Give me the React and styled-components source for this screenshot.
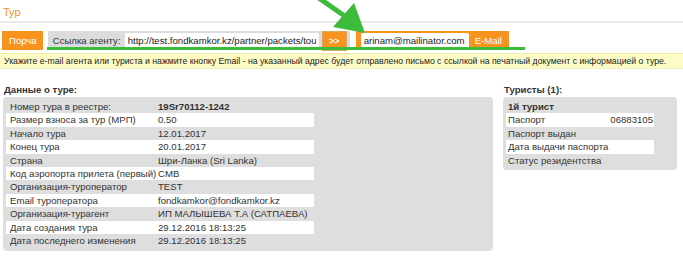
import styled, { createGlobalStyle } from 'styled-components';

const GlobalStyle = createGlobalStyle`
  body {
    margin: 0;
    background: #fff;
    font-family: "Liberation Sans", Arial, sans-serif;
    font-size: 9.6px;
    color: #333;
  }
`;

const Page = styled.div`
  position: relative;
  width: 683px;
  height: 257px;
  overflow: hidden;
`;

const Title = styled.div`
  color: #f7931e;
  font-size: 11px;
  padding: 6px 0 0 3px;
  height: 15px;
  border-bottom: 2px solid #e9e9e9;
`;

const Toolbar = styled.div`
  display: flex;
  align-items: stretch;
  height: 19px;
  margin: 8px 0 0 2px;
`;

const OrangeButton = styled.div`
  display: flex;
  align-items: center;
  padding: 0 6px 0 7px;
  background: #f8931f;
  color: #fff;
  margin-right: 5px;
`;

const LinkPanel = styled.div`
  display: flex;
  align-items: center;
  background: #dcdcdc;
  padding: 0 4px 0 5px;
  gap: 4px;
`;

const LinkLabel = styled.span`
  width: 68px;
`;

const EmailPanel = styled.div`
  display: flex;
  align-items: center;
  background: #f8931f;
  margin-left: 6px;
  padding: 0 7px 0 5px;
  gap: 6px;
`;

const Field = styled.input`
  width: ${p => p.$w}px;
  height: 16px;
  box-sizing: border-box;
  border: none;
  border-radius: 2px;
  background: #fff;
  padding: 0 3px;
  font-family: "Liberation Sans", Arial, sans-serif;
  font-size: 9.6px;
  color: #222;
  outline: none;
`;

const SmallButton = styled.div`
  display: flex;
  align-items: center;
  justify-content: center;
  width: 23px;
  height: 18px;
  background: #f8931f;
  color: #fff;
  font-size: 8.5px;
  font-weight: bold;
  box-shadow: 0 0 0 1px #d9a860;
`;

const EmailLabel = styled.span`
  color: #fff;
`;

const Notice = styled.div`
  margin-top: 3px;
  background: #fdfcc6;
  border-top: 1px solid #efeaa8;
  border-bottom: 1px solid #f4f0c0;
  padding: 2px 0 2px 4px;
  font-size: 8.7px;
  line-height: 10px;
  color: #222;
  white-space: nowrap;
`;

const Columns = styled.div`
  display: flex;
  gap: 10px;
  margin-top: 15px;
  padding-left: 3px;
`;

const Section = styled.div`
  width: ${p => p.$w}px;
`;

const SectionTitle = styled.div`
  font-weight: bold;
  color: #333;
  padding-left: 1px;
  height: 13px;
`;

const Panel = styled.div`
  background: #dedede;
  border-radius: 4px;
  padding: 3px 3px 4px 3px;
  height: ${p => p.$h}px;
`;

const Row = styled.div`
  display: grid;
  grid-template-columns: ${p => p.$cols};
  width: ${p => p.$w}px;
  height: 13.4px;
  line-height: 13.4px;
  padding-left: ${p => p.$pl}px;
  box-sizing: border-box;
  background: ${p => (p.$white ? '#fff' : 'transparent')};
  font-weight: ${p => (p.$bold ? 'bold' : 'normal')};
  white-space: nowrap;
`;

const Value = styled.span`
  font-weight: ${p => (p.$bold ? 'bold' : 'normal')};
  text-align: ${p => p.$align || 'left'};
  padding-right: ${p => (p.$align === 'right' ? 1 : 0)}px;
`;

const Annotation = styled.svg`
  position: absolute;
  left: 0;
  top: 0;
  pointer-events: none;
`;

const tourRows = [
  ['Номер тура в реестре:', '19Sr70112-1242', true],
  ['Размер взноса за тур (МРП)', '0.50'],
  ['Начало тура', '12.01.2017'],
  ['Конец тура', '20.01.2017'],
  ['Страна', 'Шри-Ланка (Sri Lanka)'],
  ['Код аэропорта прилета (первый)', 'CMB'],
  ['Организация-туроператор', 'TEST'],
  ['Email туроператора', 'fondkamkor@fondkamkor.kz'],
  ['Организация-турагент', 'ИП МАЛЫШЕВА Т.А (САТПАЕВА)'],
  ['Дата создания тура', '29.12.2016 18:13:25'],
  ['Дата последнего изменения', '29.12.2016 18:13:25'],
];

const touristRows = [
  ['Паспорт', '06883105'],
  ['Паспорт выдан', ''],
  ['Дата выдачи паспорта', ''],
  ['Статус резидентства', ''],
];

export default function App() {
  return (
    <Page>
      <GlobalStyle />
      <Title>Тур</Title>
      <Toolbar>
        <OrangeButton>Порча</OrangeButton>
        <LinkPanel>
          <LinkLabel>Ссылка агенту:</LinkLabel>
          <Field $w={194} readOnly value="http://test.fondkamkor.kz/partner/packets/tour/12345" />
          <SmallButton>&gt;&gt;</SmallButton>
        </LinkPanel>
        <EmailPanel>
          <Field $w={108} readOnly value="arinam@mailinator.com" />
          <EmailLabel>E-Mail</EmailLabel>
        </EmailPanel>
      </Toolbar>
      <Notice>
        Укажите e-mail агента или туриста и нажмите кнопку Email - на указанный адрес будет отправлено письмо с ссылкой на печатный документ с информацией о туре.
      </Notice>
      <Columns>
        <Section $w={490}>
          <SectionTitle>Данные о туре:</SectionTitle>
          <Panel $h={147}>
            {tourRows.map(([label, value, bold], i) => (
              <Row key={label} $w={308} $pl={4} $cols="148px 1fr" $white={i % 2 === 1}>
                <span>{label}</span>
                <Value $bold={bold}>{value}</Value>
              </Row>
            ))}
          </Panel>
        </Section>
        <Section $w={174}>
          <SectionTitle>Туристы (1):</SectionTitle>
          <Panel $h={66}>
            <Row $w={148} $pl={2} $cols="1fr" $bold>1й турист</Row>
            {touristRows.map(([label, value], i) => (
              <Row key={label} $w={148} $pl={2} $cols="1fr auto" $white={i % 2 === 0}>
                <span>{label}</span>
                <Value $align="right">{value}</Value>
              </Row>
            ))}
          </Panel>
        </Section>
      </Columns>
      <Annotation width="683" height="60" viewBox="0 0 683 60">
        <rect x="47" y="47" width="478" height="3" fill="#3dbb3a" />
        <line x1="316" y1="-4" x2="346" y2="17" stroke="#3dbb3a" strokeWidth="5" />
        <polygon points="365,33 333,27 354,3" fill="#3dbb3a" />
      </Annotation>
    </Page>
  );
}
